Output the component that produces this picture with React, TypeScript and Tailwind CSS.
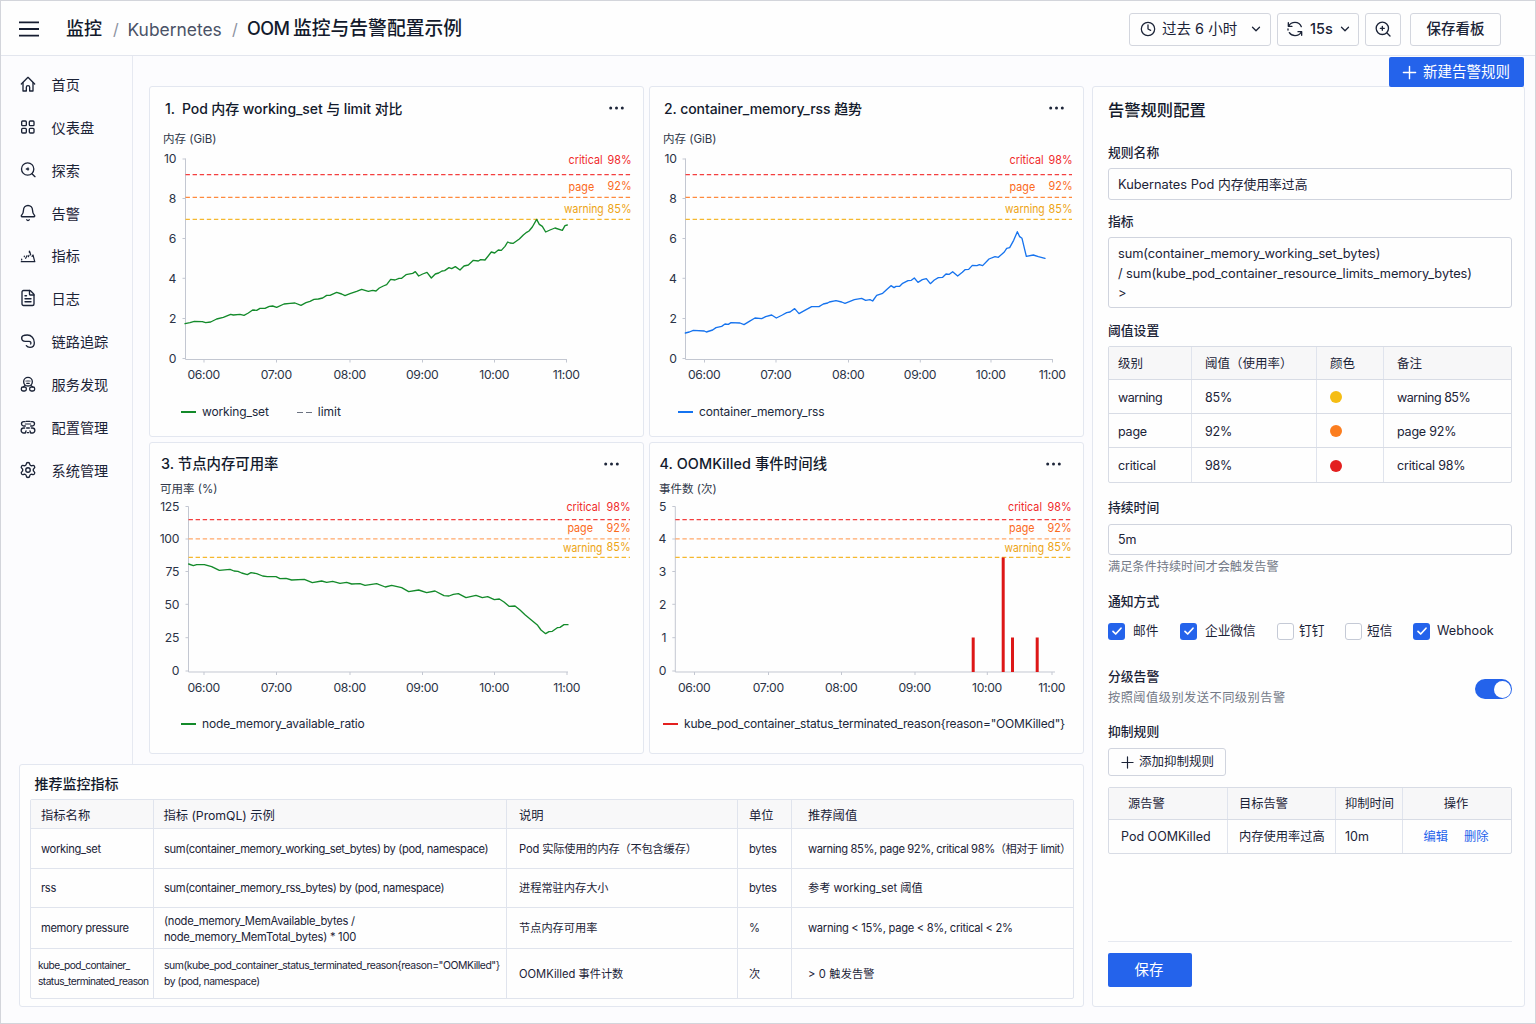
import { Bell, ChevronDown, Clock, FileText, Plus, Settings } from 'lucide-react';
import type { ReactNode } from 'react';

const RED = '#f43f3f';
const ORANGE = '#ff8a3d';
const AMBER = '#f5b82e';

/* ---------- icons ---------- */

function Glyph({ children }: { children: ReactNode }) {
  return (
    <svg viewBox="0 0 48 48" className="size-4 shrink-0" fill="none" stroke="currentColor" strokeWidth="4" strokeLinecap="round" strokeLinejoin="round">
      {children}
    </svg>
  );
}

const HomeIcon = () => (
  <Glyph>
    <path d="M4 24 24 4l20 20" />
    <path d="M9 20v25h10V34a5 5 0 0 1 10 0v11h10V20" />
  </Glyph>
);

const DashboardIcon = () => (
  <Glyph>
    <rect x="5" y="6" width="14" height="14" rx="3" />
    <rect x="28" y="6" width="14" height="14" rx="3" />
    <rect x="5" y="28" width="14" height="14" rx="3" />
    <rect x="28" y="28" width="14" height="14" rx="3" />
  </Glyph>
);

const ExploreIcon = () => (
  <Glyph>
    <circle cx="23" cy="21" r="18.5" />
    <path d="m36 35 9 9" />
    <path d="M19 21h7M24 18v6" />
  </Glyph>
);

const MetricsIcon = () => (
  <Glyph>
    <path d="M4 41h40" />
    <path d="M5 36v-3M13 26v-2M17 31l4-8M25 26l2-4M28 13v-4l2 4 2 8M36 25l3-4 5 19" strokeWidth="3.6" />
  </Glyph>
);

const TraceIcon = () => (
  <Glyph>
    <path d="M5 15c0-6 8-9 17-9 12 0 21 10 21 23 0 9-6 14-13 14-5 0-9-2-11-5" />
    <path d="M5 15c0 7 5 10 11 10h11c5 0 7 4 5 8" />
  </Glyph>
);

const ServiceIcon = () => (
  <Glyph>
    <circle cx="24" cy="17" r="13" />
    <path d="M18 15h1M24 14v2M29 15h1M20 22h8M15 28l-5 5M33 28l5 5" strokeWidth="3.4" />
    <rect x="4" y="33" width="15" height="12" rx="5" />
    <rect x="29" y="33" width="15" height="12" rx="5" />
  </Glyph>
);

const ConfigIcon = () => (
  <Glyph>
    <path d="M15 8h-4a6.500 6.500 0 0 0 0 13h5M33 8h4a6.500 6.500 0 0 1 0 13h-5" />
    <path d="M18 7h12M16 15h16" strokeWidth="3.6" />
    <path d="M14 27h-3a7.500 7.500 0 0 0 0 15h5l2-6M34 27h3a7.500 7.500 0 0 1 0 15h-5l-2-6M20 27h8M22 41h4" />
  </Glyph>
);

const SearchPlusIcon = () => (
  <Glyph>
    <circle cx="22" cy="22" r="18.5" />
    <path d="m36 36 9 9M22 16v12M16 22h12" />
  </Glyph>
);

const RefreshIcon = () => (
  <Glyph>
    <path d="M4 5v11h11M5 15C9 8 16 4 24 4c9 0 16 5 19 13" />
    <path d="M44 43V32H33M43 33c-4 7-11 11-19 11-7 0-13-3-17-9M3 24v3" />
  </Glyph>
);

/* ---------- charts ---------- */

type Label = [pos: number, text: string];
type Threshold = {
  y: number;
  color: string;
  textColor: string;
  name: string;
  nameX: number;
  nameY: number;
  nameW: number;
  value: string;
  valueY: number;
};

type ChartProps = {
  title: string;
  titleStyle: string;
  padding: string;
  box: [x: number, y: number, w: number, h: number];
  unit: string;
  unitX: number;
  unitY: number;
  axis: { x: number; top: number; bottom: number; right: number; labelX: number };
  yLabels: Label[];
  xLabels: Label[];
  thresholdEnd: number;
  thresholds: Threshold[];
  legend: ReactNode;
  children: ReactNode;
};

function Chart({ title, titleStyle, padding, box, unit, unitX, unitY, axis, yLabels, xLabels, thresholdEnd, thresholds, legend, children }: ChartProps) {
  const [bx, by, bw, bh] = box;
  return (
    <section className="flex flex-col overflow-hidden rounded-[3px] border border-[#e3e7f0] bg-[#fefefe]">
      <div className={`flex h-10 shrink-0 items-center justify-between pt-[3px] ${padding}`}>
        <h2 className={`whitespace-pre font-medium text-[#131a2c] ${titleStyle}`}>{title}</h2>
        <svg viewBox="0 0 15 4" className="-mt-0.5 h-1 w-[15px]" fill="#1d2539" role="button" aria-label="more">
          <circle cx="1.700" cy="2" r="1.500" />
          <circle cx="7.500" cy="2" r="1.500" />
          <circle cx="13.300" cy="2" r="1.500" />
        </svg>
      </div>
      <svg viewBox={`${bx} ${by} ${bw} ${bh}`} width={bw} height={bh} className="shrink-0" fontSize="12.2">
        <text x={unitX} y={unitY} fontSize="11.5" fill="#30384a">
          {unit}
        </text>
        <g stroke="#c3c7d1" strokeWidth="1">
          <path d={`M${axis.x} ${axis.top}V${axis.bottom}H${axis.right}`} fill="none" />
          {yLabels.map(([y]) => (
            <path key={y} d={`M${axis.x - 3} ${y}h3`} />
          ))}
          {xLabels.map(([x]) => (
            <path key={x} d={`M${x} ${axis.bottom}v3`} />
          ))}
        </g>
        <g fill="#2b3346" letterSpacing="-0.35">
          {yLabels.map(([y, t]) => (
            <text key={y} x={axis.labelX} y={y + 4.4} textAnchor="end">
              {t}
            </text>
          ))}
          {xLabels.map(([x, t]) => (
            <text key={x} x={x - 0.3} y={axis.bottom + 19.7} textAnchor="middle">
              {t}
            </text>
          ))}
        </g>
        {thresholds.map((t) => (
          <g key={t.name} fill={t.textColor} fontSize="12">
            <path d={`M${axis.x} ${t.y}H${thresholdEnd}`} stroke={t.color} strokeWidth="1.2" strokeDasharray="4.4 2.7" />
            <text x={t.nameX} y={t.nameY} textLength={t.nameW} lengthAdjust="spacingAndGlyphs">
              {t.name}
            </text>
            <text x={thresholdEnd - 23.4} y={t.valueY} textLength="24" lengthAdjust="spacingAndGlyphs">
              {t.value}
            </text>
          </g>
        ))}
        {children}
      </svg>
      {legend}
    </section>
  );
}

function Series({ origin, points, color }: { origin: [number, number]; points: string; color: string }) {
  return (
    <polyline
      transform={`translate(${origin[0]} ${origin[1]}) scale(0.33333)`}
      points={points}
      fill="none"
      stroke={color}
      strokeWidth="4"
      strokeLinejoin="round"
      strokeLinecap="round"
    />
  );
}

function LegendItem({ swatch, tracking, children }: { swatch: ReactNode; tracking: string; children: ReactNode }) {
  return (
    <div className={`flex items-center gap-1.5 whitespace-nowrap text-[12px] text-[#20283b] ${tracking}`}>
      {swatch}
      <span>{children}</span>
    </div>
  );
}

const WORKING_SET =
  '105,716 120,713 133,709 157,710 167,713 182,711 200,702 220,697 242,688 250,690 270,688 282,691 295,684 308,675 320,676 330,670 345,670 358,664 368,663 380,667 402,657 420,655 435,654 453,661 468,653 480,649 492,643 505,642 518,639 530,631 540,631 560,622 575,627 585,632 600,626 620,619 635,613 655,619 668,616 678,618 688,609 700,603 710,599 722,583 735,585 747,580 755,580 768,569 788,565 796,560 806,573 818,567 831,562 844,579 856,567 866,564 876,558 884,557 897,548 905,551 916,545 930,555 942,543 955,540 970,526 985,528 992,524 1005,525 1024,501 1034,504 1045,495 1054,496 1065,484 1073,471 1080,474 1090,475 1108,462 1120,450 1130,442 1137,438 1147,426 1160,403 1168,418 1177,424 1187,441 1200,435 1215,429 1237,436 1245,422 1252,420';
const RSS =
  '121,744 133,741 145,736 178,738 184,741 203,735 213,728 230,724 240,717 250,718 258,713 285,714 297,719 313,709 330,699 350,701 362,695 380,690 394,699 412,690 425,683 435,681 449,671 462,686 478,677 500,665 522,665 535,657 548,654 553,651 573,647 590,651 600,655 628,644 650,640 662,646 675,644 683,648 695,631 713,625 727,612 738,602 747,608 753,604 764,604 773,595 789,587 799,586 808,579 819,592 832,584 844,581 856,596 868,585 880,578 893,577 903,567 913,568 923,560 938,573 952,562 960,554 971,553 982,541 996,542 1003,539 1013,542 1032,522 1050,515 1060,517 1078,501 1085,490 1094,488 1106,466 1117,440 1124,455 1131,460 1144,514 1165,510 1180,515 1200,520';
const NODE_RATIO =
  '116,372 130,377 140,374 163,374 185,380 208,391 240,388 252,393 264,394 275,399 292,404 303,398 320,401 338,408 352,410 378,410 390,416 408,415 425,420 463,418 487,428 515,423 530,427 548,424 570,430 590,427 605,432 630,431 645,436 680,431 706,441 725,436 755,443 776,455 806,450 830,458 855,453 882,467 897,468 910,463 925,461 948,473 978,466 997,473 1013,470 1033,479 1048,477 1062,486 1077,499 1095,498 1110,510 1125,524 1143,539 1163,556 1173,570 1187,581 1197,575 1207,574 1222,563 1230,562 1242,554 1254,554';

const HOURS = ['06:00', '07:00', '08:00', '09:00', '10:00', '11:00'];
const hourLabels = (xs: number[]): Label[] => xs.map((x, i) => [x, HOURS[i]]);

const topThresholds = (nx: number): Threshold[] => [
  { y: 174.6, color: RED, textColor: '#f02a2a', name: 'critical', nameX: nx, nameY: 164.3, nameW: 34, value: '98%', valueY: 164.3 },
  { y: 197.4, color: ORANGE, textColor: '#fb6a1c', name: 'page', nameX: nx, nameY: 191.3, nameW: 25.6, value: '92%', valueY: 190.3 },
  { y: 219.3, color: AMBER, textColor: '#eda414', name: 'warning', nameX: nx - 4.5, nameY: 213.3, nameW: 39.6, value: '85%', valueY: 213 },
];
const bottomThresholds = (nx: number): Threshold[] => [
  { y: 519.6, color: RED, textColor: '#f02a2a', name: 'critical', nameX: nx, nameY: 510.6, nameW: 34, value: '98%', valueY: 510.6 },
  { y: 538.8, color: '#ffa869', textColor: '#fb6a1c', name: 'page', nameX: nx + 1, nameY: 532.2, nameW: 25.6, value: '92%', valueY: 531.7 },
  { y: 557.4, color: AMBER, textColor: '#eda414', name: 'warning', nameX: nx - 3.5, nameY: 551.6, nameW: 39.6, value: '85%', valueY: 551.3 },
];

/* ---------- form parts ---------- */

function Check({ on, label, gap, box }: { on?: boolean; label: string; gap: string; box: string }) {
  return (
    <label className={`flex items-center text-[12.700px] text-[#1b2337] ${gap} ${box}`}>
      {on ? (
        <span className="flex size-[17px] items-center justify-center rounded-[3px] bg-[#2463eb]">
          <svg viewBox="0 0 12 12" className="size-3" fill="none" stroke="white" strokeWidth="1.700" strokeLinecap="round" strokeLinejoin="round">
            <path d="m2 6.300 2.700 2.700L10 3.200" />
          </svg>
        </span>
      ) : (
        <span className="size-[17px] rounded-[3px] border border-[#c5cad6] bg-white" />
      )}
      <span className="whitespace-nowrap pt-px">{label}</span>
    </label>
  );
}

function FieldLabel({ children, box }: { children: ReactNode; box: string }) {
  return <div className={`flex items-center text-[12.800px] font-medium text-[#1b2337] ${box}`}>{children}</div>;
}

const NAV: [() => ReactNode, string][] = [
  [HomeIcon, '首页'],
  [DashboardIcon, '仪表盘'],
  [ExploreIcon, '探索'],
  [() => <Bell className="-mx-px size-[18px]" strokeWidth={1.8} />, '告警'],
  [MetricsIcon, '指标'],
  [() => <FileText className="-mx-px size-[18px]" strokeWidth={1.8} />, '日志'],
  [TraceIcon, '链路追踪'],
  [ServiceIcon, '服务发现'],
  [ConfigIcon, '配置管理'],
  [() => <Settings className="-mx-px size-[18px]" strokeWidth={1.8} />, '系统管理'],
];

const TIGHT = 'tracking-[-0.350px]';

type Cell = [text: string, style: string];
const METRIC_ROWS: { h: string; cells: Cell[] }[] = [
  {
    h: 'h-[40px]',
    cells: [
      ['working_set', `pl-2.5 ${TIGHT}`],
      ['sum(container_memory_working_set_bytes) by (pod, namespace)', 'pl-2.5 tracking-[-0.380px]'],
      ['Pod 实际使用的内存（不包含缓存）', 'pl-3 tracking-[-0.150px]'],
      ['bytes', 'pl-[11px] tracking-[-0.300px]'],
      ['warning 85%, page 92%, critical 98%（相对于 limit）', 'pl-4 tracking-[-0.410px]'],
    ],
  },
  {
    h: 'h-[39px]',
    cells: [
      ['rss', `pl-2.5 ${TIGHT}`],
      ['sum(container_memory_rss_bytes) by (pod, namespace)', 'pl-2.5 tracking-[-0.380px]'],
      ['进程常驻内存大小', 'pl-3'],
      ['bytes', 'pl-[11px] tracking-[-0.300px]'],
      ['参考 working_set 阈值', 'pl-4'],
    ],
  },
  {
    h: 'h-[41px]',
    cells: [
      ['memory pressure', `pl-2.5 ${TIGHT}`],
      ['(node_memory_MemAvailable_bytes /\nnode_memory_MemTotal_bytes) * 100', 'pt-[2px] pl-2.5 tracking-[-0.270px]'],
      ['节点内存可用率', 'pl-3'],
      ['%', 'pl-[11px]'],
      ['warning < 15%, page < 8%, critical < 2%', 'pl-4 tracking-[-0.300px]'],
    ],
  },
  {
    h: 'h-[49px]',
    cells: [
      ['kube_pod_container_\nstatus_terminated_reason', 'pl-[7px] text-[10.200px] leading-[15.500px] tracking-[-0.540px]'],
      ['sum(kube_pod_container_status_terminated_reason{reason="OOMKilled"}\nby (pod, namespace)', 'pl-2.5 text-[10.400px] leading-[15.500px] tracking-[-0.450px]'],
      ['OOMKilled 事件计数', 'pl-3'],
      ['次', 'pl-[11px]'],
      ['> 0 触发告警', 'pl-4 tracking-[0.150px]'],
    ],
  },
];

const METRIC_HEADS: Cell[] = [
  ['指标名称', 'pl-2.5'],
  ['指标 (PromQL) 示例', 'pl-[9.500px] tracking-[-0.050px]'],
  ['说明', 'pl-3'],
  ['单位', 'pl-[11px]'],
  ['推荐阈值', 'pl-4'],
];

const LEVELS: [name: string, pct: string, dot: string, tracking: string][] = [
  ['warning', '85%', 'bg-[#f5bd14]', 'tracking-[-0.500px]'],
  ['page', '92%', 'bg-[#fb7d1f]', 'tracking-[-0.200px]'],
  ['critical', '98%', 'bg-[#e3201f]', 'tracking-[-0.200px]'],
];

export default function App() {
  return (
    <div className="flex h-[1024px] w-[1536px] flex-col overflow-hidden border border-[#d3d5db] bg-[#fcfcfe] font-['Inter','Noto_Sans_CJK_SC',sans-serif] leading-none text-[#1b2337]">
      <header className="flex h-[55px] shrink-0 items-center border-b border-[#e3e6ee] bg-[#fefefe] pl-[18px] pr-[34px] pt-[2px]">
        <svg viewBox="0 0 20 16" className="h-4 w-5" stroke="#161d30" strokeWidth="1.800">
          <path d="M0 1.300h20M0 8h20M0 14.700h20" />
        </svg>
        <nav className="ml-[27px] flex items-center pt-px text-[18px] text-[#131a2c]">
          <span className="font-medium">监控</span>
          <span className="ml-[11px] w-[14.500px] text-[16px] text-[#8b91a0]">/</span>
          <span className="w-[94px] text-[17.400px] text-[#4a5266]">Kubernetes</span>
          <span className="ml-[10.500px] w-[15px] text-[16px] text-[#8b91a0]">/</span>
          <span className="flex items-center text-[18.800px] font-medium">
            <span className="w-[46px] text-[18px] tracking-[-0.600px]">OOM</span>
            <span>监控与告警配置示例</span>
          </span>
        </nav>
        <div className="ml-auto flex items-center text-[14.500px] text-[#1b2337]">
          <button className="flex h-[33px] w-[142px] items-center rounded-[3px] border border-[#d3d6de] pl-2.5">
            <Clock className="size-4" strokeWidth={1.900} />
            <span className="ml-1.5 whitespace-nowrap">过去 6 小时</span>
            <ChevronDown className="ml-auto mr-[7px] size-3.5" strokeWidth={2.200} />
          </button>
          <button className="ml-[6px] flex h-[33px] w-[82px] items-center rounded-[3px] border border-[#d3d6de] pl-[9px]">
            <RefreshIcon />
            <span className="ml-[7px] font-medium">15s</span>
            <ChevronDown className="ml-auto mr-[6px] size-3.5" strokeWidth={2.200} />
          </button>
          <button className="ml-[6px] flex h-[33px] w-9 items-center justify-center rounded-[3px] border border-[#d3d6de]">
            <SearchPlusIcon />
          </button>
          <button className="ml-[9px] flex h-[33px] w-[91px] items-center justify-center rounded-[3px] border border-[#d3d6de] font-medium">保存看板</button>
        </div>
      </header>

      <div className="flex min-h-0 flex-1">
        <div className="flex w-[1083px] shrink-0 flex-col">
          <div className="flex h-[708px] shrink-0">
            <aside className="flex w-[132px] shrink-0 flex-col border-r border-[#e6e9f1] pl-[18.500px] pt-[6.800px]">
              {NAV.map(([Icon, text]) => (
                <a key={text} className="flex h-[42.850px] items-center gap-4 text-[14.200px] text-[#1b2337]">
                  <Icon />
                  <span className="whitespace-nowrap pt-[2px]">{text}</span>
                </a>
              ))}
            </aside>

            <main className="grid grid-cols-[495px_435px] grid-rows-[351px_312px] content-start gap-[5px] pl-4 pt-[30px]">
              <Chart
                title="1.  Pod 内存 working_set 与 limit 对比"
                titleStyle="text-[14px] tracking-[-0.100px]"
                padding="pl-[15px] pr-[19px]"
                box={[150, 127, 493, 268]}
                unit="内存 (GiB)"
                unitX={163}
                unitY={143}
                axis={{ x: 185.5, top: 158.5, bottom: 359.5, right: 567, labelX: 176 }}
                yLabels={[[159, '10'], [198.5, '8'], [238.5, '6'], [278.3, '4'], [318.5, '2'], [358.5, '0']]}
                xLabels={hourLabels([204, 276.5, 350, 422.5, 494.5, 566.5])}
                thresholdEnd={631}
                thresholds={topThresholds(568.6)}
                legend={
                  <div className="flex h-[34px] items-center gap-7 pl-[31px]">
                    <LegendItem tracking="tracking-[-0.130px]" swatch={<i className="h-[2.500px] w-[15px] bg-[#138a2a]" />}>working_set</LegendItem>
                    <LegendItem tracking="tracking-normal" swatch={<i className="flex w-[15px] gap-[3px]"><b className="h-px w-1.5 bg-[#6b7280]" /><b className="h-px w-1.5 bg-[#6b7280]" /></i>}>limit</LegendItem>
                  </div>
                }
              >
                <Series origin={[150, 85]} points={WORKING_SET} color="#138a2a" />
              </Chart>

              <Chart
                title="2. container_memory_rss 趋势"
                titleStyle="text-[14px] tracking-[-0.080px]"
                padding="pl-[14px] pr-[19px]"
                box={[650, 127, 433, 268]}
                unit="内存 (GiB)"
                unitX={663}
                unitY={143}
                axis={{ x: 685.5, top: 158.5, bottom: 359.5, right: 1053, labelX: 676.5 }}
                yLabels={[[159, '10'], [198.5, '8'], [238.5, '6'], [278.3, '4'], [318.5, '2'], [358.5, '0']]}
                xLabels={hourLabels([704.5, 776, 848.5, 920.3, 991, 1052.5])}
                thresholdEnd={1072}
                thresholds={topThresholds(1009.6)}
                legend={
                  <div className="flex h-[34px] items-center pl-[28px]">
                    <LegendItem tracking="tracking-[-0.130px]" swatch={<i className="h-[2.500px] w-[15px] bg-[#1473f0]" />}>container_memory_rss</LegendItem>
                  </div>
                }
              >
                <Series origin={[645, 85]} points={RSS} color="#1673ee" />
              </Chart>

              <Chart
                title="3. 节点内存可用率"
                titleStyle="text-[14.400px]"
                padding="pl-[11px] pr-[24px]"
                box={[150, 483, 493, 224]}
                unit="可用率 (%)"
                unitX={160}
                unitY={492.5}
                axis={{ x: 188.5, top: 506.5, bottom: 672, right: 568, labelX: 179 }}
                yLabels={[[506.5, '125'], [539, '100'], [571.5, '75'], [604.3, '50'], [637.7, '25'], [671, '0']]}
                xLabels={hourLabels([204, 276.5, 350, 422.5, 494.5, 567])}
                thresholdEnd={630}
                thresholds={bottomThresholds(566.4)}
                legend={
                  <div className="flex h-[34px] items-center pl-[31px]">
                    <LegendItem tracking="tracking-[-0.150px]" swatch={<i className="h-[2.500px] w-[15px] bg-[#138a2a]" />}>node_memory_available_ratio</LegendItem>
                  </div>
                }
              >
                <Series origin={[150, 440]} points={NODE_RATIO} color="#138a2a" />
              </Chart>

              <Chart
                title="4. OOMKilled 事件时间线"
                titleStyle="text-[14.400px] tracking-[0.080px]"
                padding="pl-[9.500px] pr-[22px]"
                box={[650, 483, 433, 224]}
                unit="事件数 (次)"
                unitX={659}
                unitY={492.5}
                axis={{ x: 675.3, top: 506.5, bottom: 672, right: 1055, labelX: 666 }}
                yLabels={[[506.5, '5'], [539, '4'], [571.5, '3'], [604.3, '2'], [637.7, '1'], [671, '0']]}
                xLabels={hourLabels([694.5, 768.5, 841.5, 915, 987.3, 1052])}
                thresholdEnd={1071}
                thresholds={bottomThresholds(1008)}
                legend={
                  <div className="flex h-[34px] items-center pl-[13px]">
                    <LegendItem tracking="tracking-[-0.210px]" swatch={<i className="h-[2.500px] w-[15px] bg-[#e3201f]" />}>
                      {'kube_pod_container_status_terminated_reason{reason="OOMKilled"}'}
                    </LegendItem>
                  </div>
                }
              >
                <path d="M973.200 637.500V672M1003.200 557.500V672M1012.500 637.500V672M1037.200 637.500V672" stroke="#dd1717" strokeWidth="3" />
              </Chart>
            </main>
          </div>

          <section className="ml-[18px] h-[243px] rounded-[3px] border border-[#e3e7f0] bg-[#fefefe] pl-2.5 pr-[9px]">
            <h2 className="flex h-[34px] items-center pl-[4.500px] pt-[3px] text-[14px] font-medium text-[#131a2c]">推荐监控指标</h2>
            <div className="w-[1044px] rounded-[2px] border border-[#e0e4ed]">
              <div className="grid h-[29px] grid-cols-[123px_353px_231px_54px_1fr] border-b border-[#e0e4ed] bg-[#f8f8f9] text-[12.300px]">
                {METRIC_HEADS.map(([text, style], i) => (
                  <div key={text} className={`flex items-center pt-[4px] ${i < 4 ? 'border-r border-[#e0e4ed]' : ''} ${style}`}>
                    {text}
                  </div>
                ))}
              </div>
              {METRIC_ROWS.map((row, r) => (
                <div key={r} className={`grid ${row.h} grid-cols-[123px_353px_231px_54px_1fr] text-[11.200px] leading-4 ${r < 3 ? 'border-b border-[#e0e4ed]' : ''}`}>
                  {row.cells.map(([text, style], i) => (
                    <div key={i} className={`flex items-center whitespace-pre ${i < 4 ? 'border-r border-[#e0e4ed]' : ''} ${style}`}>
                      {text}
                    </div>
                  ))}
                </div>
              ))}
            </div>
          </section>
        </div>

        <div className="flex w-[441px] shrink-0 flex-col pl-2 pt-px">
          <button className="relative z-10 mr-px flex h-[30px] w-[135px] items-center self-end rounded-[2px] bg-[#2463eb] pl-[10px] text-[14.500px] text-white">
            <Plus className="size-[21px]" strokeWidth={1.600} />
            <span className="ml-[3px] whitespace-nowrap">新建告警规则</span>
          </button>
          <aside className="-mt-px flex h-[921px] flex-col rounded-[3px] border border-[#e3e7f0] bg-[#fefefe] pl-[15px] pr-[12px]">
            <h2 className="flex h-[46px] items-center pt-px text-[16.300px] font-medium text-[#131a2c]">告警规则配置</h2>
            <FieldLabel box="h-[35px] pb-[1px] pt-[7px]">规则名称</FieldLabel>
            <div className="flex h-8 items-center rounded-[3px] border border-[#d0d4de] px-[9px] pt-[2px] text-[12.800px]">Kubernates Pod 内存使用率过高</div>
            <FieldLabel box="h-[37px] pt-[8px]">指标</FieldLabel>
            <div className="h-[71px] whitespace-pre rounded-[3px] border border-[#d0d4de] px-[9px] pt-[6px] text-[12.800px] leading-[19.600px] tracking-[-0.060px]">
              {'sum(container_memory_working_set_bytes)\n/ sum(kube_pod_container_resource_limits_memory_bytes)\n>'}
            </div>
            <FieldLabel box="h-[38px] pt-[8px]">阈值设置</FieldLabel>
            <div className="rounded-[2px] border border-[#d8dce5] text-[12.500px]">
              <div className="grid h-[33px] grid-cols-[83px_125px_67px_1fr] border-b border-[#d8dce5] bg-[#f7f7f8]">
                <div className="flex items-center border-r border-[#e0e4ed] pl-[9px] pt-[3px]">级别</div>
                <div className="flex items-center border-r border-[#e0e4ed] pl-[13px] pt-[3px]">阈值（使用率）</div>
                <div className="flex items-center border-r border-[#e0e4ed] pl-[13px] pt-[3px]">颜色</div>
                <div className="flex items-center pl-[13px] pt-[3px]">备注</div>
              </div>
              {LEVELS.map(([name, pct, dot, tracking], i) => (
                <div key={name} className={`grid h-[34px] grid-cols-[83px_125px_67px_1fr] ${i < 2 ? 'border-b border-[#d8dce5]' : ''}`}>
                  <div className={`flex items-center border-r border-[#e0e4ed] pl-[9px] pt-[3px] ${tracking}`}>{name}</div>
                  <div className="flex items-center border-r border-[#e0e4ed] pl-[13px] pt-[3px] tracking-[-0.200px]">{pct}</div>
                  <div className="flex items-center border-r border-[#e0e4ed] pl-[13px] pt-px">
                    <i className={`size-[12px] rounded-full ${dot}`} />
                  </div>
                  <div className={`flex items-center pl-[13px] pt-[3px] ${tracking}`}>{name} {pct}</div>
                </div>
              ))}
            </div>
            <FieldLabel box="h-[41px] pt-[9px]">持续时间</FieldLabel>
            <div className="flex h-[31px] items-center rounded-[3px] border border-[#d0d4de] px-[9px] pt-[2px] text-[12.500px]">5m</div>
            <div className="flex h-[23px] items-center pt-px text-[12.200px] text-[#737987]">满足条件持续时间才会触发告警</div>
            <FieldLabel box="h-[44px] pt-[4px]">通知方式</FieldLabel>
            <div className="flex h-[18px] items-center">
              <Check on label="邮件" gap="gap-2" box="w-[72px]" />
              <Check on label="企业微信" gap="gap-2" box="w-[97px]" />
              <Check label="钉钉" gap="gap-[5px]" box="w-[68px]" />
              <Check label="短信" gap="gap-[5px]" box="w-[68px]" />
              <Check on label="Webhook" gap="gap-[7px]" box="" />
            </div>
            <div className="mt-[26px] flex h-[44px] items-center justify-between">
              <div>
                <FieldLabel box="h-[20px]">分级告警</FieldLabel>
                <div className="flex h-[22px] items-center pt-px text-[12.200px] tracking-[0.500px] text-[#737987]">按照阈值级别发送不同级别告警</div>
              </div>
              <span className="mt-0.5 flex h-5 w-[37px] items-center justify-end rounded-full bg-[#2463eb] pr-px">
                <i className="size-[17px] rounded-full bg-white" />
              </span>
            </div>
            <FieldLabel box="h-[38px] pt-[6px]">抑制规则</FieldLabel>
            <button className="flex h-7 w-[118px] items-center rounded-[3px] border border-[#d0d4de] pl-[8.500px] text-[12.500px]">
              <Plus className="size-[19px]" strokeWidth={1.500} />
              <span className="ml-[2.500px] whitespace-nowrap">添加抑制规则</span>
            </button>
            <div className="mt-[11px] rounded-[2px] border border-[#d8dce5] text-[12.250px]">
              <div className="grid h-8 grid-cols-[119px_108px_67px_1fr] border-b border-[#d8dce5] bg-[#f7f7f8]">
                <div className="flex items-center border-r border-[#e0e4ed] pl-[19px] pt-px">源告警</div>
                <div className="flex items-center border-r border-[#e0e4ed] pl-[11px] pt-px">目标告警</div>
                <div className="flex items-center whitespace-nowrap border-r border-[#e0e4ed] pl-[9px] pt-px">抑制时间</div>
                <div className="flex items-center justify-center pr-0.5 pt-px">操作</div>
              </div>
              <div className="grid h-[33px] grid-cols-[119px_108px_67px_1fr]">
                <div className="flex items-center border-r border-[#e0e4ed] pl-[12px] pt-[2px] text-[12.500px]">Pod OOMKilled</div>
                <div className="flex items-center whitespace-nowrap border-r border-[#e0e4ed] pl-[11px] pt-[2px]">内存使用率过高</div>
                <div className="flex items-center border-r border-[#e0e4ed] pl-[9px] pt-[2px] text-[12.500px]">10m</div>
                <div className="flex items-center justify-center gap-4 pr-0.5 pt-[2px] text-[#2463eb]">
                  <a>编辑</a>
                  <a>删除</a>
                </div>
              </div>
            </div>
            <div className="mb-[19px] mt-auto border-t border-[#e6e9f0] pt-[11px]">
              <button className="flex h-[34px] w-[84px] items-center justify-center rounded-[2px] bg-[#2463eb] pr-0.5 text-[14.400px] text-white">保存</button>
            </div>
          </aside>
        </div>
      </div>
    </div>
  );
}
